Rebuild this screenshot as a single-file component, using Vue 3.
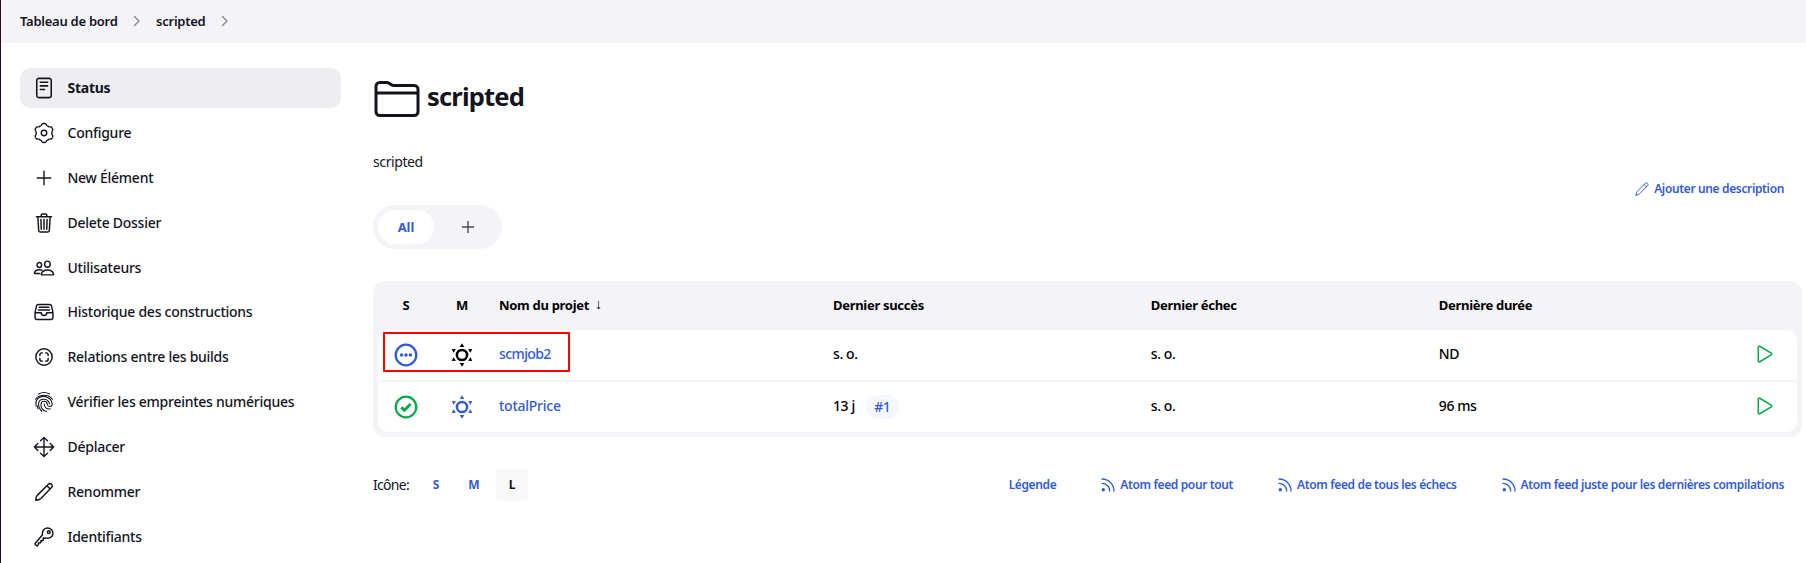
<script setup>
const gear = (() => {
  const pts = []
  for (let i = 0; i < 120; i++) {
    const a = (i / 120) * Math.PI * 2
    const c = Math.cos(6 * a)
    const r = 9.5 + 0.95 * Math.tanh(1.8 * c)
    pts.push(`${(12 + r * Math.sin(a)).toFixed(2)} ${(12 - r * Math.cos(a)).toFixed(2)}`)
  }
  return 'M' + pts.join('L') + 'Z'
})()

const pen = 'M3 21c.2-2.600 .7-4.300 1.900-5.600L16.700 3.600a2.350 2.350 0 0 1 3.500 0a2.350 2.350 0 0 1 0 3.500L8.600 19c-1.300 1.200-3 1.800-5.600 2zM15.200 5.200l3.500 3.500'

const tasks = [
  { label: 'Status', active: true, box: 24, w: 1.7, paths: ['M6.300 1.500h11.400a2.200 2.200 0 0 1 2.200 2.200v16.600a2.200 2.200 0 0 1-2.200 2.200h-11.400a2.200 2.200 0 0 1-2.200-2.200v-16.600a2.200 2.200 0 0 1 2.200-2.200zM8 5.800h8M8 9.700h8M8 13.600h4.500'] },
  { label: 'Configure', box: 24, w: 1.5, paths: [gear, 'M15 12a3 3 0 1 1-6 0a3 3 0 0 1 6 0z'] },
  { label: 'New Élément', box: 512, w: 32, paths: ['M256 100v312M412 256H100'] },
  { label: 'Delete Dossier', box: 512, w: 34, paths: ['M112 112l20 320c.95 18.490 14.400 32 32 32h184c17.670 0 30.870-13.510 32-32l20-320M80 112h352M192 112V72a23.930 23.930 0 0 1 24-24h80a23.930 23.930 0 0 1 24 24v40M256 176v224M184 176l8 224M328 176l-8 224'] },
  { label: 'Utilisateurs', box: 512, w: 34, paths: ['M402 168c-2.930 40.670-33.100 72-66 72s-63.120-31.320-66-72c-3-42.310 26.370-72 66-72s69 30.460 66 72z', 'M336 304c-65.170 0-127.840 32.370-143.540 95.410-2.080 8.340 3.150 16.590 11.720 16.590h263.650c8.570 0 13.770-8.250 11.720-16.590C463.850 335.360 401.180 304 336 304z', 'M200 185.940c-2.340 32.480-26.720 58.060-53 58.060s-50.700-25.570-53-58.060C91.610 152.150 115.340 128 147 128s55.390 24.770 53 57.940z', 'M206 306c-18.050-8.270-37.930-11.450-59-11.450-52 0-102.100 25.850-114.650 76.200-1.650 6.660 2.530 13.250 9.370 13.250H154'] },
  { label: 'Historique des constructions', box: 512, w: 34, paths: ['M384 80H128c-26 0-43 14-48 40L48 272v112a48.140 48.140 0 0 0 48 48h320a48.140 48.140 0 0 0 48-48V272l-32-152c-5-27-23-40-48-40zM48 272h144M320 272h144M192 272a64 64 0 0 0 128 0M144 144h224M128 208h256'] },
  { label: 'Relations entre les builds', box: 24, w: 1.6, paths: ['M20.900 12a8.900 8.900 0 1 1-17.800 0a8.900 8.900 0 0 1 17.800 0z', 'M7.500 10.300v-.8a2 2 0 0 1 2-2h.8M13.700 7.500h.8a2 2 0 0 1 2 2v.8M16.500 13.700v.8a2 2 0 0 1-2 2h-.8M10.300 16.500h-.8a2 2 0 0 1-2-2v-.8'] },
  { label: 'Vérifier les empreintes numériques', box: 24, w: 1.2, paths: ['M6 3.300C9.500 1.300 14.500 1.300 18 3.300', 'M2.800 9C7.200 3.200 16.800 3.200 21.200 9', 'M3.400 16.500c-.8-4.500.4-7.900 3.700-9.500c5.500-2.800 13.600.3 13.800 7.500c0 3-4.800 3.300-5.200.2c-.3-4.500-6.600-4.600-7-.3c-.2 3.400 2 6.900 5.900 8', 'M9.700 22.200C6.400 19 5.700 15.500 6.200 13c1.200-5.500 10.700-5.500 11.800 1.200', 'M12.200 14.200c.1 3.600 2.600 5.900 6.500 5.300', 'M5.500 19.300c-.5-1-.8-2-.9-3.100'] },
  { label: 'Déplacer', box: 512, w: 32, paths: ['M176 112l80-80 80 80M256 32v448M176 400l80 80 80-80M400 176l80 80-80 80M112 176l-80 80 80 80M32 256h448'] },
  { label: 'Renommer', box: 24, w: 1.6, paths: [pen] },
  { label: 'Identifiants', box: 512, w: 34, paths: ['M218.100 167.170c0 13 0 25.600 4.100 37.400-43.100 50.600-156.900 184.300-167.500 194.500a20.170 20.170 0 0 0-6.700 15c0 8.500 5.200 16.700 9.600 21.300 6.600 6.900 34.800 33 40 28 15.400-15 18.500-19 24.800-25.200 9.500-9.300-1-28.300 2.300-36s6.800-9.200 12.500-10.400 15.800 2.900 23.700 3c8.300.1 12.800-3.400 19-9.200 5-4.600 8.600-8.900 8.700-15.600.2-9-12.800-20.900-3.100-30.400s23.700 6.200 34 5 22.800-15.500 24.100-21.600-11.700-21.800-9.700-30.700c.7-3 6.800-10 11.400-11s25 6.900 29.600 5.900c5.600-1.200 12.100-7.100 17.400-10.400 15.500 6.700 29.600 9.400 47.700 9.400 68.500 0 124-53.400 124-119.200S408.500 48 340 48s-121.900 53.370-121.900 119.170zM400 144a32 32 0 1 1-32-32 32 32 0 0 1 32 32z'] }
]

const jobs = [
  { name: 'scmjob2', status: 'notbuilt', success: 's. o.', failure: 's. o.', duration: 'ND' },
  { name: 'totalPrice', status: 'ok', success: '13 j', build: '#1', failure: 's. o.', duration: '96 ms' }
]

const feeds = ['Atom feed pour tout', 'Atom feed de tous les échecs', 'Atom feed juste pour les dernières compilations']
</script>

<template>
  <div class="page">
    <header class="crumbs">
      <span>Tableau de bord</span>
      <svg class="chev" viewBox="0 0 8 12"><path d="M1.500 1.500L6 6l-4.500 4.500" /></svg>
      <span>scripted</span>
      <svg class="chev" viewBox="0 0 8 12"><path d="M1.500 1.500L6 6l-4.500 4.500" /></svg>
    </header>
    <div class="body">
      <nav class="side">
        <a v-for="t in tasks" :key="t.label" class="task" :class="{ active: t.active }">
          <svg class="ico" :viewBox="`0 0 ${t.box} ${t.box}`" :stroke-width="t.w"><path v-for="p in t.paths" :key="p" :d="p" /></svg>
          <span class="task-label">{{ t.label }}</span>
        </a>
      </nav>
      <main class="main">
        <h1 class="title">
          <svg class="folder" viewBox="0 0 512 512"><path d="M440 432H72a40 40 0 0 1-40-40V120a40 40 0 0 1 40-40h75.890a40 40 0 0 1 22.190 6.720l27.840 18.560a40 40 0 0 0 22.190 6.720H440a40 40 0 0 1 40 40v240a40 40 0 0 1-40 40zM32 192h448" /></svg>
          <span class="name">scripted</span>
        </h1>
        <p class="desc">scripted</p>
        <div class="add">
          <svg class="small-ico" viewBox="0 0 24 24"><path :d="pen" /></svg>
          <span class="t">Ajouter une description</span>
        </div>
        <div class="tabs">
          <span class="tab">All</span>
          <span class="plus"><svg viewBox="0 0 14 14"><path d="M7 1v12M1 7h12" /></svg></span>
        </div>
        <section class="table">
          <div class="row head">
            <span class="c">S</span><span class="c">M</span>
            <span class="cell">Nom du projet<span class="arrow">↓</span></span>
            <span class="cell">Dernier succès</span>
            <span class="cell">Dernier échec</span>
            <span class="cell">Dernière durée</span>
          </div>
          <div v-for="j in jobs" :key="j.name" class="row job">
            <span class="c">
              <svg class="big" :class="j.status" viewBox="0 0 24 24">
                <circle class="ring" cx="12" cy="12" r="10.300" />
                <g v-if="j.status === 'notbuilt'" class="dots"><circle cx="7.600" cy="12" r="1.800" /><circle cx="12" cy="12" r="1.800" /><circle cx="16.400" cy="12" r="1.800" /></g>
                <path v-else class="check" d="M7.400 12.300l3 2.900 6.200-6.200" />
              </svg>
            </span>
            <span class="c">
              <svg class="big sun" :class="j.status" viewBox="0 0 24 24">
                <circle cx="12" cy="12" r="5.100" />
                <path d="M12 .3l2.300 3.700H9.700zM12 23.700l2.300-3.700H9.700zM1.700 6.100l4.300.1-2.500 3.500zM22.300 6.100l-4.300.1 2.500 3.500zM1.700 17.900l4.300-.1-2.500-3.500zM22.300 17.900l-4.300-.1 2.500-3.500z" />
              </svg>
            </span>
            <span class="cell link" :class="j.status"><span class="up">{{ j.name }}</span></span>
            <span class="cell"><span class="up">{{ j.success }}</span><span v-if="j.build" class="badge">{{ j.build }}</span></span>
            <span class="cell"><span class="up">{{ j.failure }}</span></span>
            <span class="cell"><span class="up">{{ j.duration }}</span></span>
            <span class="run"><svg viewBox="0 0 512 512"><path d="M112 111v290c0 17.440 17 28.520 31 20.160l247.900-148.370c12.120-7.250 12.120-26.330 0-33.580L143 90.840c-14-8.360-31 2.720-31 20.160z" /></svg></span>
          </div>
          <div class="mark"></div>
        </section>
        <footer class="foot">
          <span class="lbl t">Icône:</span>
          <span class="size"><span class="t">S</span></span><span class="size"><span class="t">M</span></span><span class="size on"><span class="t">L</span></span>
          <div class="feeds">
            <span class="t">Légende</span>
            <span v-for="f in feeds" :key="f" class="feed">
              <svg viewBox="0 0 14 14"><circle cx="2.300" cy="11.700" r="1.700" /><path d="M1 5.300a7.700 7.700 0 0 1 7.700 7.700M1 1a12 12 0 0 1 12 12" /></svg>
              <span class="t">{{ f }}</span>
            </span>
          </div>
        </footer>
      </main>
    </div>
  </div>
</template>

<style>
body { overflow: hidden; }
</style>
<style scoped>
.page { box-sizing: border-box; height: 563px; overflow: hidden; border-left: 1px solid #2c0a22; background: #fff; color: #14141f; font-family: "Noto Sans", "Open Sans", sans-serif; font-size: 14px; white-space: nowrap; }
.page * { box-sizing: border-box; }
svg { display: block; flex: none; fill: none; stroke: currentColor; stroke-linecap: round; stroke-linejoin: round; }
.t { padding-bottom: 2px; }
.up { padding-bottom: 3px; }
.crumbs { height: 43px; padding: 0 0 2px 19px; background: #f4f3f8; display: flex; align-items: center; font-size: 13px; font-weight: 600; letter-spacing: -.26px; }
.chev { width: 8px; height: 12px; margin: 0 15px 0 15.500px; color: #84848f; stroke-width: 1.4; }
.body { display: flex; }
.side { width: 321px; margin: 25px 0 0 19px; display: flex; flex-direction: column; gap: 4.900px; flex: none; }
.task { height: 40px; display: flex; align-items: center; padding-left: 13px; gap: 12.500px; border-radius: 10px; font-weight: 500; letter-spacing: -.26px; }
.task-label { padding-bottom: 1px; }
.task.active { background: #eeedf2; font-weight: 700; }
.ico { width: 22px; height: 22px; }
.main { width: 1429px; margin-left: 32px; }
.title { display: flex; align-items: center; gap: 6px; height: 48px; margin: 32px 0 0; font-size: 25.500px; font-weight: 700; letter-spacing: -.8px; }
.folder { width: 48px; height: 48px; stroke-width: 32; }
.name { padding-bottom: 6px; }
.desc { margin: 29px 0 0; height: 20px; line-height: 20px; font-size: 14px; letter-spacing: -.4px; }
.add { display: flex; justify-content: flex-end; align-items: center; gap: 4px; height: 20px; margin: 7px 18px 0 0; color: #335bd6; font-size: 12px; font-weight: 600; letter-spacing: -.36px; }
.small-ico { width: 16px; height: 16px; stroke-width: 1.4; }
.tabs { display: flex; width: 129px; height: 44px; margin-top: 6px; padding: 5px; border-radius: 22px; background: #f4f3f8; }
.tab { width: 56px; border-radius: 17px; background: #fff; display: flex; align-items: center; justify-content: center; color: #335bd6; font-size: 13px; font-weight: 700; }
.plus { flex: 1; padding-left: 5px; display: flex; align-items: center; justify-content: center; color: #4b4b55; }
.plus svg { width: 14px; height: 14px; stroke-width: 1.4; stroke-linecap: butt; }
.table { position: relative; margin-top: 32px; padding: 0 5px 5px; height: 156px; border-radius: 12px; background: #f4f3f8; color: #000; }
.row { display: grid; grid-template-columns: 56px 56px 334px 317.800px 288px 1fr 64px; align-items: center; }
.head { height: 49px; padding-bottom: 2px; font-size: 13px; font-weight: 700; letter-spacing: -.3px; }
.job { height: 50px; background: #fff; font-weight: 500; letter-spacing: -.42px; border-radius: 10px 10px 3px 3px; }
.job + .job { margin-top: 2px; border-radius: 3px 3px 10px 10px; }
.c { display: flex; justify-content: center; }
.cell { display: flex; align-items: center; padding-left: 9px; }
.arrow { margin-left: 6px; font-family: "Liberation Serif", serif; font-size: 14px; line-height: 14px; font-weight: 400; }
.big { width: 24px; height: 24px; }
.ring { stroke-width: 2.300; }
.notbuilt { color: #335bd6; }
.ok { color: #0ba84a; }
.dots { fill: currentColor; stroke: none; }
.check { stroke-width: 3; stroke-linecap: butt; stroke-linejoin: miter; }
.sun.notbuilt { color: #000; }
.sun.ok { color: #335bd6; }
.sun circle { stroke-width: 2.500; }
.sun path { fill: currentColor; stroke: none; }
.link { color: #335bd6; letter-spacing: -.6px; }
.link.ok { color: #335bd6; letter-spacing: -.25px; }
.badge { display: flex; align-items: center; justify-content: center; width: 33px; height: 24px; margin-left: 11px; padding-bottom: 1px; margin-bottom: 1px; border-radius: 12px; background: #f5f7fe; color: #335bd6; }
.run { padding: 0 0 2px 20px; color: #0ba84a; }
.run svg { width: 24px; height: 24px; stroke-width: 32; }
.mark { position: absolute; left: 10px; top: 51px; width: 187px; height: 40px; border: 2px solid #fd0000; border-radius: 1px; }
.foot { display: flex; align-items: center; height: 32px; margin-top: 32px; padding-right: 18px; }
.lbl { width: 47px; letter-spacing: -.7px; }
.size { width: 32px; height: 32px; margin-right: 6px; border-radius: 4px; display: flex; align-items: center; justify-content: center; color: #335bd6; font-size: 12px; font-weight: 700; }
.size.on { background: #f8f8f8; color: #14141f; }
.feeds { margin-left: auto; display: flex; align-items: center; gap: 45px; color: #335bd6; font-size: 12px; font-weight: 600; letter-spacing: -.37px; }
.feed { display: flex; align-items: center; gap: 5px; }
.feed svg { width: 14px; height: 14px; stroke-width: 1.300; }
.feed circle { fill: currentColor; stroke: none; }
</style>
